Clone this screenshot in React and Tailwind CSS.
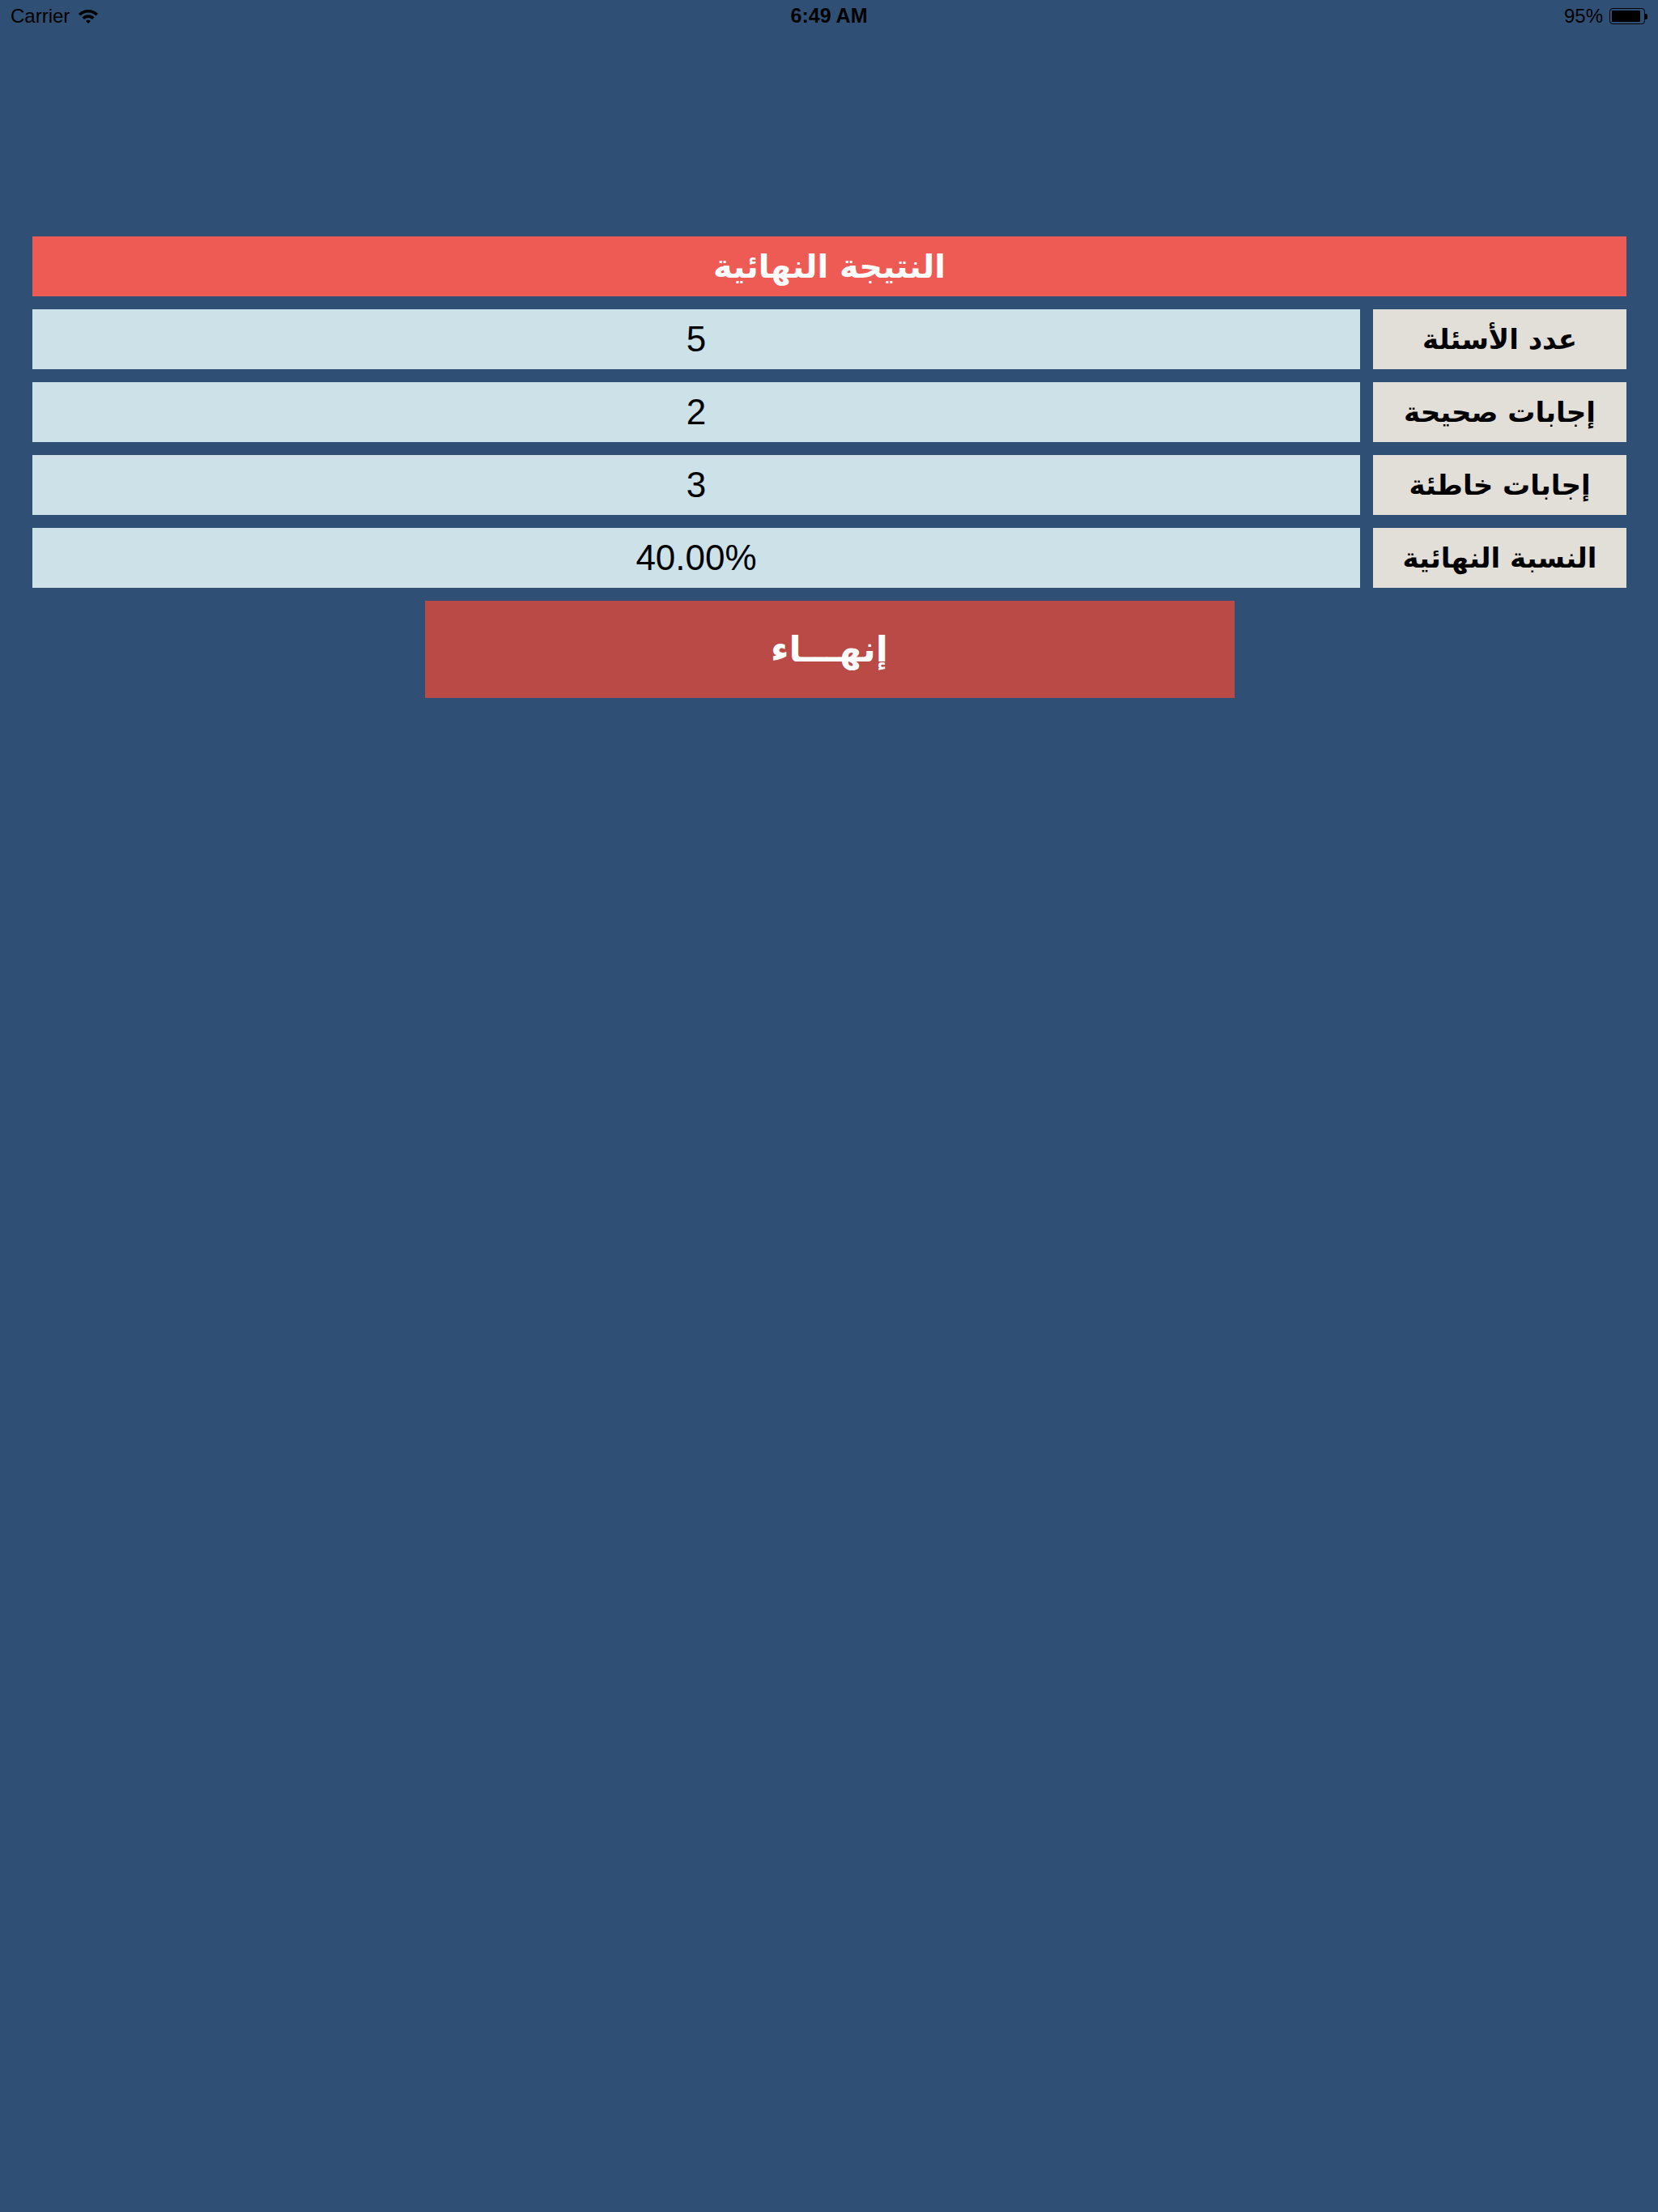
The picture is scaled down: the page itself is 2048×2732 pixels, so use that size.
import React from 'react';

const rows = [
  { label: 'عدد الأسئلة', value: '5' },
  { label: 'إجابات صحيحة', value: '2' },
  { label: 'إجابات خاطئة', value: '3' },
  { label: 'النسبة النهائية', value: '40.00%' },
];

function StatusBar() {
  return (
    <div className="relative h-[40px] flex items-center justify-between px-[13px] text-black font-['Liberation_Sans',Arial,sans-serif] text-[24px]">
      <div className="flex items-center gap-[10px]">
        <span>Carrier</span>
        <svg width="26" height="20" viewBox="0 0 26 20">
          <path d="M1 7 A17 17 0 0 1 25 7 L22.5 9.5 A13.5 13.5 0 0 0 3.5 9.5 Z" fill="#000" />
          <path d="M5.5 11.5 A10.5 10.5 0 0 1 20.5 11.5 L18 14 A7 7 0 0 0 8 14 Z" fill="#000" />
          <path d="M10 16 A4.5 4.5 0 0 1 16 16 L13 19 Z" fill="#000" />
        </svg>
      </div>
      <div className="absolute left-0 right-0 text-center font-bold text-[25px] pointer-events-none">6:49 AM</div>
      <div className="flex items-center gap-[8px]">
        <span>95%</span>
        <div className="flex items-center">
          <div className="w-[44px] h-[20px] rounded-[4px] border-[1.5px] border-black p-[2px]">
            <div className="h-full w-[92%] bg-black rounded-[1px]" />
          </div>
          <div className="w-[3px] h-[7px] bg-black rounded-r-[2px]" />
        </div>
      </div>
    </div>
  );
}

export default function App() {
  return (
    <div className="min-h-screen bg-[#2f5074]">
      <StatusBar />
      <div className="pl-[40px] pr-[39px] pt-[252px] flex flex-col gap-[16px]">
        <div className="h-[74px] bg-[#ee5b54] flex items-center justify-center text-white font-bold text-[40px] font-['DejaVu_Sans',sans-serif]" dir="rtl">
          النتيجة النهائية
        </div>
        {rows.map(r => (
          <div key={r.label} className="h-[74px] flex gap-[16px]">
            <div className="flex-1 bg-[#cde1e8] flex items-center justify-center text-black text-[44px] font-['Liberation_Sans',Arial,sans-serif]">
              {r.value}
            </div>
            <div className="w-[313px] bg-[#e2dfd9] flex items-center justify-center text-black font-bold text-[34px] font-['DejaVu_Sans',sans-serif]" dir="rtl">
              {r.label}
            </div>
          </div>
        ))}
        <button className="mx-auto w-[1000px] h-[120px] bg-[#ba4a45] text-white font-bold text-[44px] font-['DejaVu_Sans',sans-serif]" dir="rtl">
          إنهـــاء
        </button>
      </div>
    </div>
  );
}
